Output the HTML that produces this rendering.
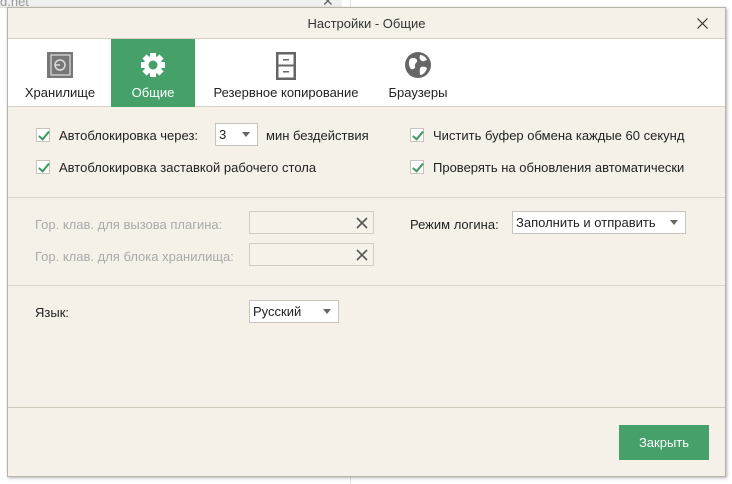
<!DOCTYPE html>
<html><head><meta charset="utf-8"><style>
*{margin:0;padding:0;box-sizing:border-box}
body{width:732px;height:484px;background:#fff;font-family:"Liberation Sans",sans-serif;font-size:13px;color:#222;position:relative;overflow:hidden}
.abs{position:absolute}
.bgbar{left:0;top:0;width:342px;height:8px;background:#f0f0f0;border-bottom:1px solid #ddd}
.dlg{left:7px;top:7px;width:719px;height:470px;background:#f5f1e8;border:1px solid #b8b3a8;box-shadow:1px 1px 3px rgba(0,0,0,.3)}
.title{left:0;top:0;width:717px;height:31px;text-align:center;line-height:31px;font-size:13px;color:#333;border-bottom:1px solid #d8d2c4}
.tabs{left:0;top:31px;width:717px;height:68px;background:#fff;border-bottom:1px solid #d8d2c4}
.tab{position:absolute;top:0;height:68px;text-align:center;font-size:13px;color:#222}
.tab span{position:absolute;left:-10px;right:-10px;top:46px}
.tab svg{position:absolute;left:50%;top:12px;transform:translateX(-50%)}
.act{background:#45a06a;color:#fff}
.cb{width:14px;height:14px;border:1px solid #c8c4bc;background:#fff}
.cb:after{content:"";position:absolute;left:4px;top:0px;width:4px;height:9px;border:solid #3d9a5f;border-width:0 2px 2px 0;transform:rotate(40deg)}
.sel{background:#fff;border:1px solid #c8c4bc;height:23px;line-height:21px;padding-left:3px}
.sel:after{content:"";position:absolute;right:7px;top:8px;border:4px solid transparent;border-top:5px solid #666}
.hk{background:#f6f2ea;border:1px solid #d0ccc4;height:23px}
.hk svg{position:absolute;right:5px;top:5px}
.gray{color:#aaa}
.hr{left:0;width:717px;height:1px;background:#dcd6ca}
</style></head><body>
<div class="abs bgbar"></div>
<div class="abs" style="left:0;top:-6px;color:#999;font-size:13px">d.net</div>
<div class="abs" style="left:322px;top:-7px;color:#666;font-size:14px">✕</div>
<div class="abs" style="left:350px;top:0;width:1px;height:484px;background:#e0e0e0"></div>
<div class="abs dlg">
 <div class="abs title">Настройки - Общие</div>
 <svg class="abs" style="right:17px;top:10px" width="11" height="11" viewBox="0 0 11 11"><path d="M0.5 0.5L10.5 10.5M10.5 0.5L0.5 10.5" stroke="#333" stroke-width="1.2"/></svg>
 <div class="abs tabs">
  <div class="tab" style="left:8px;width:88px"><svg width="28" height="28" viewBox="0 0 28 28"><rect x="1" y="1" width="26" height="26" fill="#777"/><rect x="5" y="4" width="19" height="20" fill="none" stroke="#ddd" stroke-width="1.2"/><circle cx="14" cy="14" r="5" fill="none" stroke="#ddd" stroke-width="1.5"/><line x1="9" y1="14" x2="14" y2="14" stroke="#ddd" stroke-width="1.5"/></svg><span>Хранилище</span></div>
  <div class="tab act" style="left:103px;width:84px"><svg width="28" height="28" viewBox="0 0 28 28"><g fill="#fff"><circle cx="14" cy="14" r="9"/><rect x="11" y="2" width="6" height="24"/><rect x="2" y="11" width="24" height="6"/><rect x="11" y="2" width="6" height="24" transform="rotate(45 14 14)"/><rect x="11" y="2" width="6" height="24" transform="rotate(-45 14 14)"/></g><circle cx="14" cy="14" r="4.5" fill="#45a06a"/></svg><span>Общие</span></div>
  <div class="tab" style="left:198px;width:160px"><svg width="22" height="30" viewBox="0 0 22 30"><rect x="1" y="1" width="20" height="28" fill="#666"/><rect x="3.5" y="3.5" width="15" height="10" fill="#fff"/><rect x="3.5" y="15.5" width="15" height="11" fill="#fff"/><rect x="8" y="8" width="6" height="1.5" fill="#666"/><rect x="8" y="20" width="6" height="1.5" fill="#666"/></svg><span>Резервное копирование</span></div>
  <div class="tab" style="left:370px;width:80px"><svg width="28" height="28" viewBox="0 0 28 28"><circle cx="14" cy="14" r="13" fill="#666"/><path d="M6 8c3-2 6-1 7 1 1 3-3 3-2 6 1 2-2 4-4 3-2-2-3-7-1-10zM16 4c3 0 6 2 7 5-2 0-3 2-5 1-2-1-3-3-2-6zM17 16c2-1 5 0 6 1-1 4-4 7-7 7 0-3-1-6 1-8z" fill="#fff"/></svg><span>Браузеры</span></div>
 </div>
 <div class="abs cb" style="left:28px;top:120px"></div>
 <div class="abs" style="left:51px;top:120px">Автоблокировка через:</div>
 <div class="abs sel" style="left:207px;top:115px;width:43px">3</div>
 <div class="abs" style="left:258px;top:120px">мин бездействия</div>
 <div class="abs cb" style="left:28px;top:152px"></div>
 <div class="abs" style="left:51px;top:152px">Автоблокировка заставкой рабочего стола</div>
 <div class="abs cb" style="left:402px;top:120px"></div>
 <div class="abs" style="left:425px;top:120px">Чистить буфер обмена каждые 60 секунд</div>
 <div class="abs cb" style="left:402px;top:152px"></div>
 <div class="abs" style="left:425px;top:152px">Проверять на обновления автоматически</div>
 <div class="abs hr" style="top:189px"></div>
 <div class="abs gray" style="left:27px;top:209px">Гор. клав. для вызова плагина:</div>
 <div class="abs hk" style="left:241px;top:203px;width:125px"><svg width="12" height="12" viewBox="0 0 12 12"><path d="M1 1L11 11M11 1L1 11" stroke="#555" stroke-width="1.6"/></svg></div>
 <div class="abs gray" style="left:27px;top:241px">Гор. клав. для блока хранилища:</div>
 <div class="abs hk" style="left:241px;top:235px;width:125px"><svg width="12" height="12" viewBox="0 0 12 12"><path d="M1 1L11 11M11 1L1 11" stroke="#555" stroke-width="1.6"/></svg></div>
 <div class="abs" style="left:402px;top:209px">Режим логина:</div>
 <div class="abs sel" style="left:504px;top:203px;width:174px">Заполнить и отправить</div>
 <div class="abs hr" style="top:277px"></div>
 <div class="abs" style="left:27px;top:297px">Язык:</div>
 <div class="abs sel" style="left:241px;top:292px;width:90px">Русский</div>
 <div class="abs hr" style="top:399px;background:#cdc7ba"></div>
 <div class="abs" style="left:611px;top:417px;width:90px;height:35px;background:#45a06a;color:#fff;text-align:center;line-height:35px">Закрыть</div>
</div>
</body></html>
